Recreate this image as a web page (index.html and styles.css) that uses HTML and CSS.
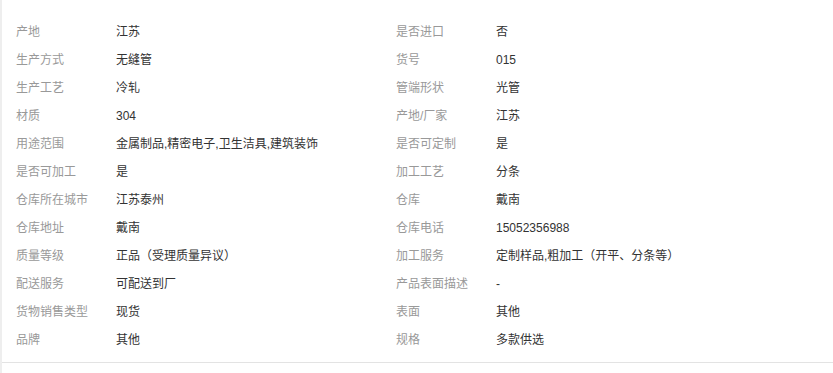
FILE: index.html
```html
<!DOCTYPE html>
<html lang="zh">
<head>
<meta charset="utf-8">
<link rel="stylesheet" href="styles.css">
</head>
<body>
<div class="wrap">
  <div class="panel">
    <dl class="grid">
      <div class="item"><dt>产地</dt><dd>江苏</dd></div>
      <div class="item"><dt>是否进口</dt><dd>否</dd></div>
      <div class="item"><dt>生产方式</dt><dd>无缝管</dd></div>
      <div class="item"><dt>货号</dt><dd>015</dd></div>
      <div class="item"><dt>生产工艺</dt><dd>冷轧</dd></div>
      <div class="item"><dt>管端形状</dt><dd>光管</dd></div>
      <div class="item"><dt>材质</dt><dd>304</dd></div>
      <div class="item"><dt>产地/厂家</dt><dd>江苏</dd></div>
      <div class="item"><dt>用途范围</dt><dd>金属制品,精密电子,卫生洁具,建筑装饰</dd></div>
      <div class="item"><dt>是否可定制</dt><dd>是</dd></div>
      <div class="item"><dt>是否可加工</dt><dd>是</dd></div>
      <div class="item"><dt>加工工艺</dt><dd>分条</dd></div>
      <div class="item"><dt>仓库所在城市</dt><dd>江苏泰州</dd></div>
      <div class="item"><dt>仓库</dt><dd>戴南</dd></div>
      <div class="item"><dt>仓库地址</dt><dd>戴南</dd></div>
      <div class="item"><dt>仓库电话</dt><dd>15052356988</dd></div>
      <div class="item"><dt>质量等级</dt><dd>正品（受理质量异议）</dd></div>
      <div class="item"><dt>加工服务</dt><dd>定制样品,粗加工（开平、分条等）</dd></div>
      <div class="item"><dt>配送服务</dt><dd>可配送到厂</dd></div>
      <div class="item"><dt>产品表面描述</dt><dd>-</dd></div>
      <div class="item"><dt>货物销售类型</dt><dd>现货</dd></div>
      <div class="item"><dt>表面</dt><dd>其他</dd></div>
      <div class="item"><dt>品牌</dt><dd>其他</dd></div>
      <div class="item"><dt>规格</dt><dd>多款供选</dd></div>
    </dl>
  </div>
</div>
</body>
</html>
```
FILE: styles.css
```css
html, body {
  margin: 0;
  padding: 0;
  background: #fff;
}
body {
  font-family: "Liberation Sans", "Noto Sans CJK SC", sans-serif;
  font-size: 12px;
}
.wrap {
  border-left: 2px solid #eeeeee;
  min-height: 373px;
  box-sizing: border-box;
}
.panel {
  padding: 18px 0 8px 14px;
  border-bottom: 1px solid #e3e3e3;
}
.grid {
  margin: 0;
  display: grid;
  grid-template-columns: 380px 380px;
}
.item {
  display: flex;
  height: 28px;
  line-height: 28px;
}
.item dt {
  width: 100px;
  color: #999999;
}
.item dd {
  margin: 0;
  color: #333333;
}
```
